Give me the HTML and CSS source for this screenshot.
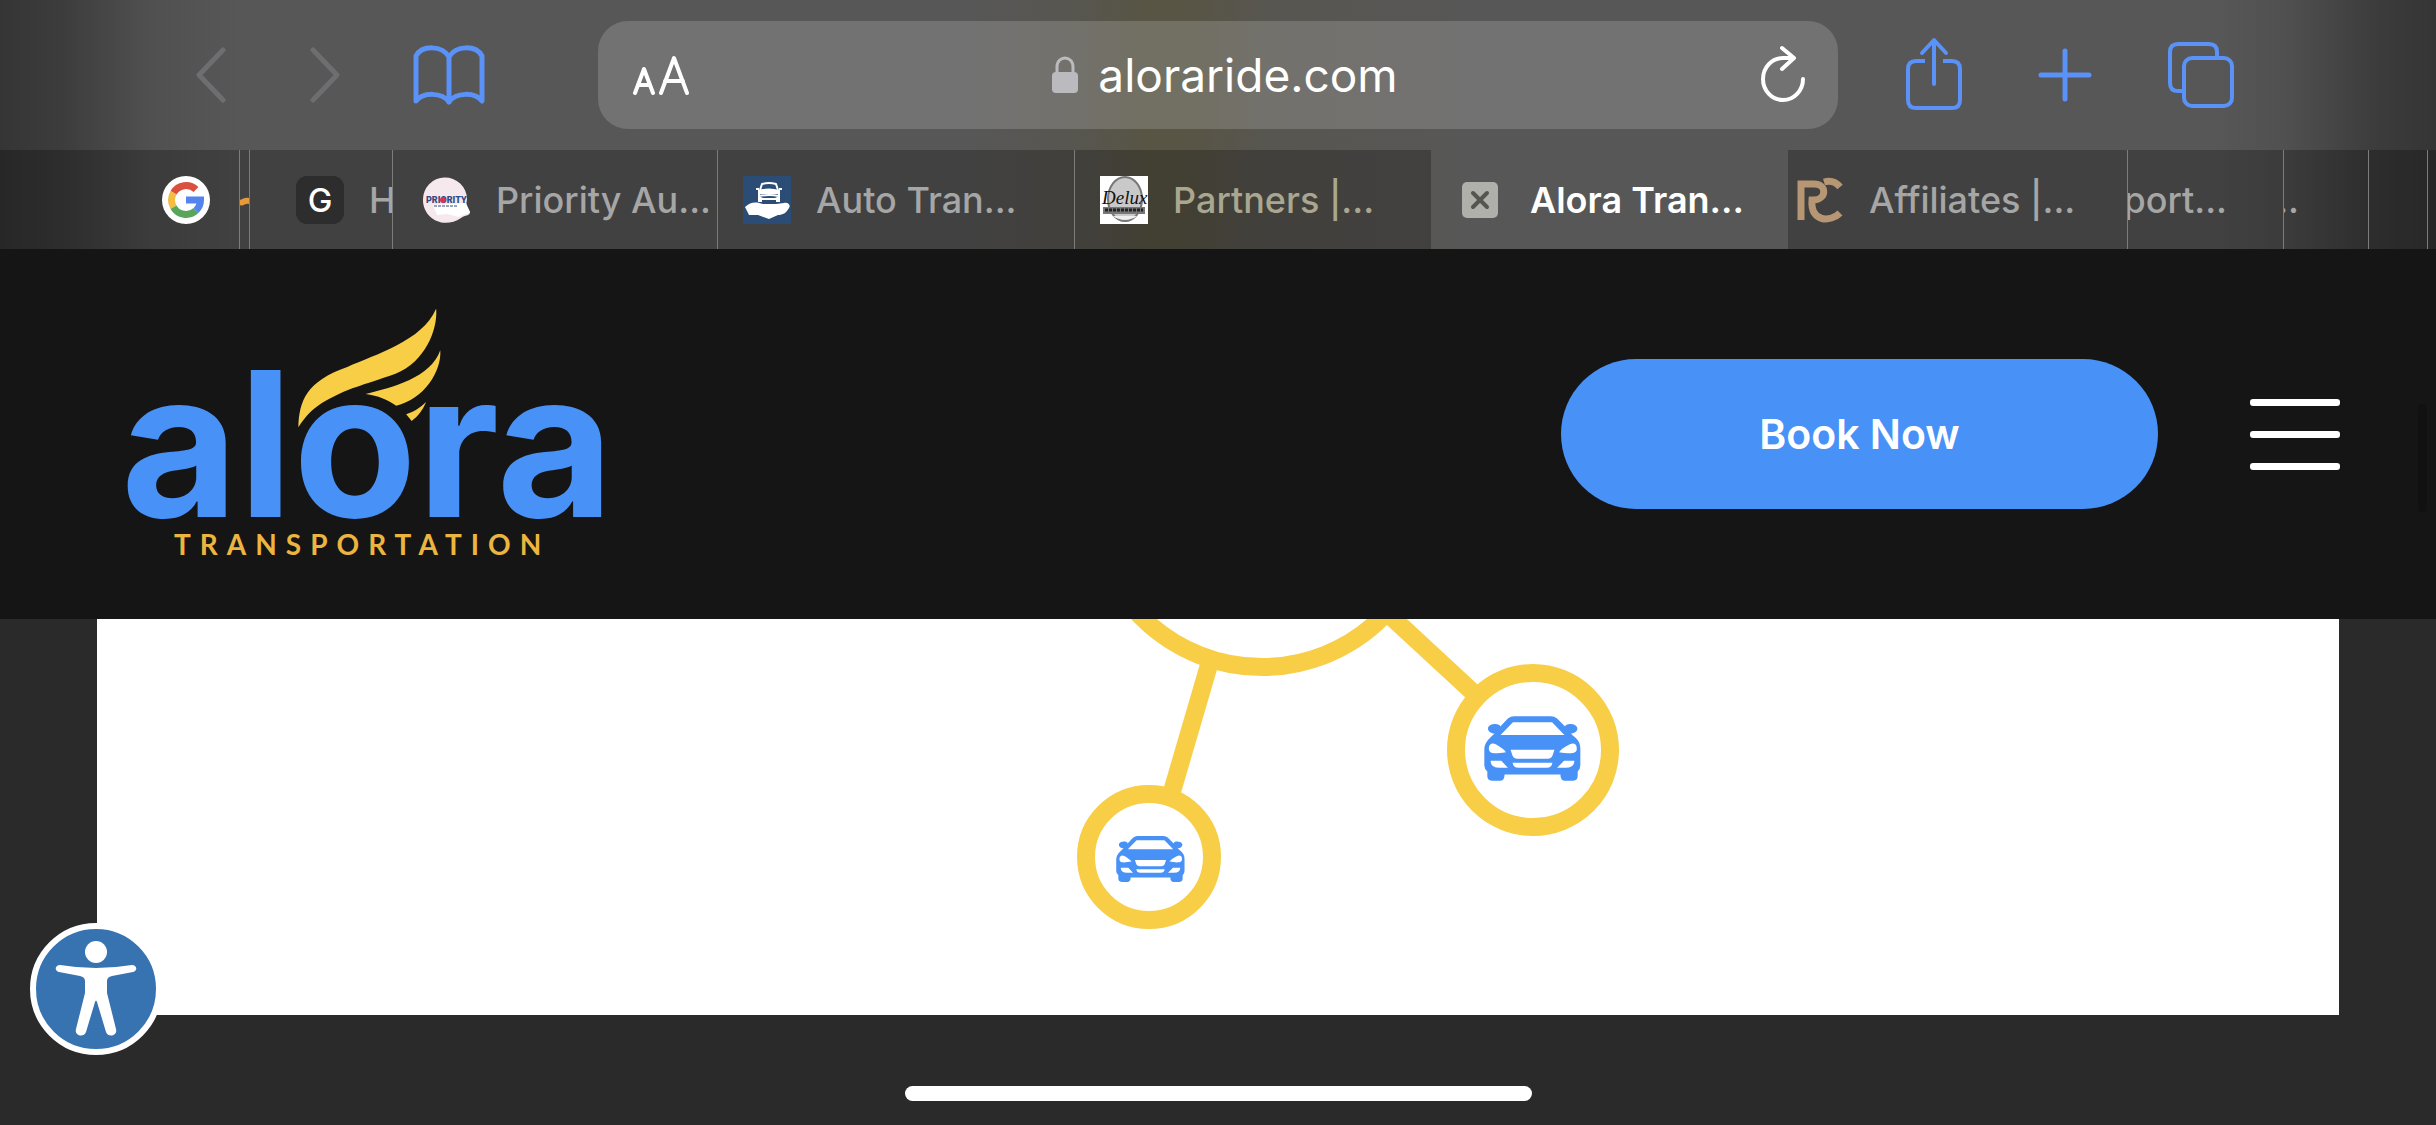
FILE: index.html
```html
<!DOCTYPE html>
<html lang="en">
<head>
    <meta charset="UTF-8">
    <meta name="viewport" content="width=device-width, initial-scale=1.0">
    <title>Alora Transportation</title>
    <link rel="stylesheet" href="styles.css">
</head>
<body>
    <div class="browser">
        <div class="toolbar">
            <div class="tools tools-left">
                <button type="button" class="tool" aria-label="Back">
                    <svg width="32" height="56" viewBox="0 0 32 56"><path d="M28 3L4 28l24 25" fill="none" stroke="#6e6e70" stroke-width="5" stroke-linecap="round" stroke-linejoin="round"/></svg>
                </button>
                <button type="button" class="tool" aria-label="Forward">
                    <svg width="32" height="56" viewBox="0 0 32 56"><path d="M4 3l24 25L4 53" fill="none" stroke="#6e6e70" stroke-width="5" stroke-linecap="round" stroke-linejoin="round"/></svg>
                </button>
                <button type="button" class="tool" aria-label="Bookmarks">
                    <svg width="72" height="60" viewBox="0 0 72 60"><path d="M36 57V12C29 0 9 0 3 11v45c7-9 26-9 33 1 7-10 26-10 33-1V11C63 0 43 0 36 12" fill="none" stroke="#5a92f8" stroke-width="5" stroke-linecap="round" stroke-linejoin="round"/></svg>
                </button>
            </div>
            <div class="address">
                <button type="button" class="tool reader" aria-label="Page settings">
                    <svg width="58" height="40" viewBox="0 0 58 40" fill="none" stroke="#fff" stroke-width="4" stroke-linecap="round" stroke-linejoin="round"><path d="M3 38l9-24 9 24M6 30h12"/><path d="M29 38L42 3l13 35M33 26h18"/></svg>
                </button>
                <div class="site">
                    <svg width="26" height="38" viewBox="0 0 26 38"><path d="M5 18v-7c0-12 16-12 16 0v7" fill="none" stroke="#bbbabf" stroke-width="3"/><rect y="16" width="26" height="21" rx="4" fill="#bbbabf"/></svg>
                    <span>aloraride.com</span>
                </div>
                <button type="button" class="tool" aria-label="Reload">
                    <svg width="46" height="60" viewBox="0 0 46 60"><path d="M43 34A20 21 0 1 1 23 13h9M22 3l12 10-12 11" fill="none" stroke="#fff" stroke-width="4" stroke-linecap="round" stroke-linejoin="round"/></svg>
                </button>
            </div>
            <div class="tools tools-right">
                <button type="button" class="tool" aria-label="Share">
                    <svg width="58" height="76" viewBox="0 0 58 76" fill="none" stroke="#5a92f8" stroke-width="4" stroke-linecap="round" stroke-linejoin="round"><path d="M20 24h-9q-8 0-8 8v31q0 8 8 8h36q8 0 8-8V32q0-8-8-8h-9" stroke-linecap="butt"/><path d="M29 47V4M17 16L29 3l12 13"/></svg>
                </button>
                <button type="button" class="tool" aria-label="New tab">
                    <svg width="54" height="54" viewBox="0 0 54 54"><path d="M27 3v48M3 27h48" stroke="#5a92f8" stroke-width="5" stroke-linecap="round"/></svg>
                </button>
                <button type="button" class="tool" aria-label="Show tabs">
                    <svg width="68" height="68" viewBox="0 0 68 68" fill="none" stroke="#5a92f8" stroke-width="4"><path d="M50 16v-5q0-8-8-8H11q-8 0-8 8v31q0 8 8 8h5"/><rect x="17" y="17" width="48" height="48" rx="8"/></svg>
                </button>
            </div>
        </div>

        <nav class="tabs">
            <a href="#" class="tab tab-google" aria-label="Google">
                <svg width="48" height="48" viewBox="0 0 48 48"><circle cx="24" cy="24" r="24" fill="#fff"/><g fill="none" stroke-width="7"><path d="M34 13.500A14.500 14.500 0 0 0 11.500 16.800" stroke="#d95040"/><path d="M11.500 16.800a14.500 14.500 0 0 0 0 14.400" stroke="#f2bd42"/><path d="M11.500 31.200A14.500 14.500 0 0 0 34 34.500" stroke="#58a55c"/><path d="M34 34.500A14.500 14.500 0 0 0 38.500 24H24" stroke="#5383ec"/></g></svg>
            </a>
            <a href="#" class="tab tab-sliver" aria-label="Open tab">
                <svg width="9" height="48" viewBox="0 0 9 48"><path d="M0 24c3-1 5-3 9-2v6c-4-1-6 3-9 1z" fill="#e79b38"/></svg>
            </a>
            <a href="#" class="tab tab-h"><span class="letter">G</span><span>H</span></a>
            <a href="#" class="tab tab-priority">
                <svg width="48" height="48" viewBox="0 0 48 48"><path d="M43 30l4 6c0 4-5 3-9 6C20 54 0 42 0 24a22 22 0 0 1 44-1z" fill="#f5e9ed"/><path d="M10 29l33-2 4 9c-3 3-8 2-11 5l-12-3-10 1z" fill="#fff"/><text x="3" y="27" font-family="Roboto, sans-serif" font-size="9" font-weight="900" fill="#334a80">PRIORITY</text><circle cx="20" cy="24" r="3" fill="#d23555"/><path d="M11 30h23" stroke="#334a80" stroke-width="1" stroke-dasharray="3 1"/></svg>
                <span>Priority Au...</span>
            </a>
            <a href="#" class="tab tab-wide">
                <svg width="48" height="48" viewBox="0 0 48 48"><path fill="#2b4c75" d="M0 0h48v48H0z"/><g fill="none" stroke="#fff" stroke-width="2"><path d="M17 14l2-6q7-2 14 0l2 6M13 13h3m20 0h3"/><path d="M16 15q10-3 20 0v5q-10-2-20 0zM16 20v6m20-6v6"/></g><path d="M15 18h22v-4H15zm0 8v-5h3l2 1h12l2-1h3v5h-4v-2H19v2z" fill="#fff"/><path d="M2 31c6-6 12-5 18-3h13l8-1c4-1 7 2 5 5-3 5-6 7-11 7l-9 4-11-4H6z" fill="#fff"/></svg>
                <span>Auto Tran...</span>
            </a>
            <a href="#" class="tab tab-wide tab-warm">
                <svg width="48" height="48" viewBox="0 0 48 48"><path fill="#fff" d="M0 0h48v48H0z"/><ellipse cx="25" cy="23" rx="17" ry="22" fill="#c9c9c9" stroke="#777" stroke-width="2"/><path d="M13 40c6 5 18 5 24 0z" fill="#eee"/><text x="2" y="28" font-family="Liberation Serif, serif" font-size="19" font-style="italic" fill="#111">Delux</text><path d="M3 31h42v7H3z" fill="#777"/><path d="M5 34h38" stroke="#222" stroke-width="3" stroke-dasharray="3 1"/></svg>
                <span>Partners |...</span>
            </a>
            <div class="tab tab-wide tab-active">
                <button type="button" class="tool close" aria-label="Close tab">
                    <svg width="36" height="36" viewBox="0 0 36 36"><rect width="36" height="36" rx="5" fill="#b0b0aa"/><path d="M11 11l14 14M25 11L11 25" stroke="#555550" stroke-width="4" stroke-linecap="round"/></svg>
                </button>
                <span>Alora Tran...</span>
            </div>
            <a href="#" class="tab tab-affiliates">
                <svg width="48" height="48" viewBox="0 0 48 48" fill="none" stroke="#b69673" stroke-width="7"><path d="M5 44V8h13c13 0 13 15 0 16h-2c-2 23 19 22 28 13"/><path d="M28 6c7-2 12 0 16 5"/></svg>
                <span>Affiliates |...</span>
            </a>
            <a href="#" class="tab tab-cut tab-port"><span>port...</span></a>
            <a href="#" class="tab tab-cut tab-dots"><span>..</span></a>
            <a href="#" class="tab tab-last" aria-label="Open tab"></a>
        </nav>
    </div>

    <header class="header">
        <a href="#" class="logo" aria-label="Alora Transportation">
            <svg width="480" height="250" viewBox="127 308 480 250">
                <g transform="translate(100 290) scale(.3444 .3333)" fill="#f7ce46">
                    <path d="M576 409C578 330 600 270 718 228C800 190 936 150 976 53C982 120 938 226 842 254C740 290 720 292 658 328C620 350 596 376 576 409z"/>
                    <path d="M771 309C850 290 960 260 988 178C993 240 940 326 860 344C834 326 808 314 771 309z"/>
                    <path d="M889 370Q920 360 947 333Q932 370 905 390z"/>
                </g>
                <text x="121" y="516" class="logo-name">alora</text>
                <text x="174" y="554" class="logo-sub">TRANSPORTATION</text>
            </svg>
        </a>
        <div class="header-actions">
            <button type="button" class="book">Book Now</button>
            <button type="button" class="menu" aria-label="Menu"><span></span><span></span><span></span></button>
        </div>
        <div class="scrollbar"></div>
    </header>

    <main class="page">
        <section class="card">
            <svg class="network" width="840" height="340" viewBox="798 619 840 340">
                <defs>
                    <symbol id="car" viewBox="131 78 292 194">
                        <path fill="#4791f7" fill-rule="evenodd" d="M181 134h192l-37-38H218zM203 85q8-7 19-7h110q11 0 19 7l24 24c1-12 36-10 37 5 0 10-8 15-20 16l9 8c14 11 20 21 20 38v50q0 10-8 18v14q0 14-14 14h-24q-14 0-14-19H193q0 19-14 19h-24q-14 0-14-14v-14q-9-8-9-18v-50q0-18 22-38l9-8c-12-1-20-6-20-16 1-15 36-17 37-5zM146 172c-3 20 15 20 51 14-6-9-16-15-29-23-13-8-22 0-22 9zM410 172c3 20-17 20-53 14 6-9 18-16 31-23 14-7 22 0 22 9zM211 179l6 18q4 9 14 9h92q10 0 14-9l6-18zM217 218q2 15 17 15h86q15 0 17-15zM151 212h32l20 21h-25q-27 0-27-21zM403 212h-31l-21 21h25q27 0 27-21z"/>
                    </symbol>
                </defs>
                <g fill="none" stroke="#f7ce46" stroke-width="18">
                    <path d="M1209 665l-38 130M1385 611l93 86"/>
                    <circle cx="1262" cy="497" r="170"/>
                    <circle cx="1533" cy="750" r="77"/>
                    <circle cx="1149" cy="857" r="63"/>
                </g>
                <use href="#car" x="1484" y="716" width="97" height="65"/>
                <use href="#car" x="1116" y="836" width="69" height="46"/>
            </svg>
        </section>
        <button type="button" class="access" aria-label="Accessibility">
            <svg width="120" height="120" viewBox="0 0 120 120" fill="#fff"><circle cx="60" cy="23" r="11"/><path d="M24 36q36 6 72 0c5 0 6 6 1 7l-21 4q-5 1-5 5v12l9 36c2 7-8 9-10 3L61 73q-1-3-2 0l-9 30c-2 6-12 4-10-3l9-36V52q0-4-5-5l-21-4c-5-1-4-7 1-7z"/></svg>
        </button>
        <div class="home-bar"></div>
    </main>
</body>
</html>
```
FILE: styles.css
```css
* {
    box-sizing: border-box;
}
body {
    margin: 0;
    min-height: 100vh;
    display: flex;
    flex-direction: column;
    background: #2a2a2a;
    font-family: Inter, "Liberation Sans", sans-serif;
    overflow-x: hidden;
}
button {
    border: none;
    cursor: pointer;
    font-family: inherit;
}
svg {
    display: block;
    flex: none;
}
.browser {
    background: linear-gradient(90deg, #353535 0, #3c3c3c 60px, #505050 150px, #575757 240px, #575757 40%, #575650 44%, #585545 47%, #585546 49%, #575650 52%, #575757 60%, #575757 calc(100% - 220px), #505050 calc(100% - 150px), #3c3c3c calc(100% - 60px), #353535 100%);
}
.toolbar {
    display: flex;
    align-items: center;
    height: 150px;
}
.tool {
    background: none;
    padding: 0;
    flex: none;
}
.tools {
    display: flex;
    align-items: center;
}
.tools-left {
    padding: 0 113px 0 195px;
    gap: 72px;
}
.tools-left .tool:nth-child(2) {
    margin-left: 10px;
}
.tools-right {
    padding: 0 201px 0 67px;
    gap: 75px;
}
.address {
    flex: 1;
    display: flex;
    justify-content: space-between;
    align-items: center;
    height: 108px;
    padding: 0 32px 0 34px;
    border-radius: 30px;
    background: rgba(255, 255, 255, 0.16);
}
.site {
    display: flex;
    align-items: center;
    gap: 20px;
    color: #fff;
    font-size: 46px;
    line-height: 56px;
}
.tabs {
    display: flex;
    height: 99px;
    overflow: hidden;
}
.tab {
    flex: none;
    display: flex;
    align-items: center;
    gap: 25px;
    overflow: hidden;
    border-right: 1px solid #7c7c7a;
    background: rgba(0, 0, 0, 0.25);
    color: #a6a6a6;
    font-size: 36px;
    font-weight: 500;
    line-height: 44px;
    white-space: nowrap;
    text-decoration: none;
}
.tab-google {
    width: 240px;
    padding-left: 162px;
}
.tab-sliver {
    width: 10px;
}
.tab-h {
    width: 143px;
    padding-left: 46px;
}
.letter {
    flex: none;
    width: 48px;
    border-radius: 11px;
    background: #2d2d2d;
    color: #fff;
    font-size: 33px;
    line-height: 48px;
    text-align: center;
}
.tab-priority {
    width: 325px;
    padding-left: 30px;
}
.tab-wide {
    width: 357px;
    padding-left: 25px;
}
.tab-warm {
    width: 356px;
    border-right: none;
    color: #a9a78f;
}
.tab-active {
    gap: 32px;
    padding-left: 31px;
    border-right: none;
    background: none;
    color: #fff;
    font-weight: 600;
}
.tab-affiliates {
    width: 340px;
    padding-left: 8px;
}
/* tabs at the edge show only the tail of their title */
.tab-cut {
    justify-content: flex-end;
}
.tab-port {
    width: 156px;
    padding-right: 56px;
}
.tab-dots {
    width: 85px;
    padding-right: 69px;
}
.tab-last {
    width: 59px;
}
.tabs::after {
    content: "";
    flex: 1;
    background: rgba(0, 0, 0, 0.25);
}
.header {
    position: relative;
    display: flex;
    justify-content: space-between;
    align-items: center;
    height: 370px;
    padding: 0 96px 0 127px;
    background: #151515;
}
.logo-name {
    font-family: Inter, sans-serif;
    font-size: 202px;
    font-weight: 700;
    fill: #4791f7;
}
.logo-sub {
    font-family: Lato, sans-serif;
    font-size: 28px;
    font-weight: 700;
    letter-spacing: 9px;
    fill: #ecb53f;
}
.header-actions {
    display: flex;
    align-items: center;
    gap: 92px;
}
.book {
    width: 597px;
    height: 150px;
    border-radius: 75px;
    background: #4791f7;
    color: #fff;
    font-size: 41px;
    font-weight: 600;
}
.menu {
    display: flex;
    flex-direction: column;
    gap: 25px;
    width: 90px;
    padding: 0;
    background: none;
}
.menu span {
    height: 7px;
    border-radius: 3px;
    background: #fff;
}
.scrollbar {
    position: absolute;
    right: 9px;
    top: 155px;
    width: 9px;
    height: 108px;
    border-radius: 5px;
    background: #111;
}
.page {
    position: relative;
    flex: 1;
    padding: 0 97px;
}
.card {
    display: flex;
    justify-content: center;
    padding-bottom: 56px;
    background: #fff;
}
.access {
    position: absolute;
    left: 30px;
    bottom: 70px;
    padding: 0;
    border: 6px solid #fff;
    border-radius: 50%;
    background: #3773b0;
}
.home-bar {
    position: absolute;
    left: 50%;
    bottom: 24px;
    width: 627px;
    height: 15px;
    margin-left: -313px;
    border-radius: 8px;
    background: #fff;
}
```
